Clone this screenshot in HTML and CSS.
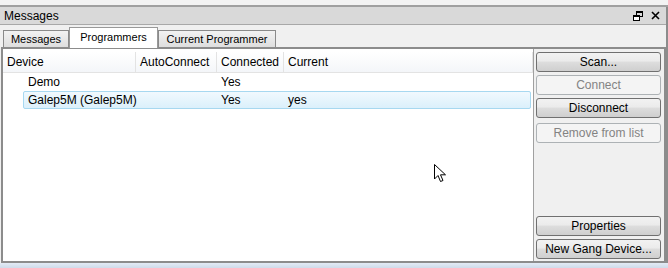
FILE: index.html
```html
<!DOCTYPE html>
<html lang="en">
<head>
    <meta charset="UTF-8">
    <title>Messages</title>
    <link rel="stylesheet" href="styles.css">
</head>
<body>
    <div class="top-strip"></div>

    <div class="dock">
        <div class="dock-title">
            <span>Messages</span>
            <div class="dock-icons">
                <svg width="10" height="10" viewBox="0 0 10 10">
                    <rect x="3.5" y="0.5" width="6" height="5" fill="none" stroke="#000"/>
                    <rect x="3.5" y="0.5" width="6" height="1.5" fill="#000"/>
                    <rect x="0.5" y="4.5" width="6" height="5" fill="#fff" stroke="#000"/>
                    <rect x="0.5" y="4.5" width="6" height="1.5" fill="#000"/>
                </svg>
                <svg width="9" height="9" viewBox="0 0 9 9">
                    <path d="M1 1 L8 8 M8 1 L1 8" stroke="#000" stroke-width="1.6"/>
                </svg>
            </div>
        </div>

        <div class="tabs">
            <div class="tab t-msg">Messages</div>
            <div class="tab t-prog active">Programmers</div>
            <div class="tab t-cur">Current Programmer</div>
        </div>

        <div class="panel">
            <div class="list">
                <div class="list-head">
                    <div class="col c-device">Device</div>
                    <div class="col c-auto">AutoConnect</div>
                    <div class="col c-conn">Connected</div>
                    <div class="col c-cur">Current</div>
                </div>
                <div class="row">
                    <div class="col c-device">Demo</div>
                    <div class="col c-auto"></div>
                    <div class="col c-conn">Yes</div>
                    <div class="col c-cur"></div>
                </div>
                <div class="row selected">
                    <div class="col c-device">Galep5M (Galep5M)</div>
                    <div class="col c-auto"></div>
                    <div class="col c-conn">Yes</div>
                    <div class="col c-cur">yes</div>
                </div>

                <!-- mouse pointer -->
                <svg class="cursor" width="14" height="20" viewBox="0 0 14 20">
                    <path d="M0.5 0.5 L0.5 15 L4 11.5 L6.5 17.5 L9 16.5 L6.5 10.8 L11.5 10.8 Z" fill="#fff" stroke="#000" stroke-width="1"/>
                </svg>
            </div>

            <div class="side">
                <button class="btn">Scan...</button>
                <button class="btn" disabled>Connect</button>
                <button class="btn">Disconnect</button>
                <button class="btn spaced" disabled>Remove from list</button>
                <div class="grow"></div>
                <button class="btn">Properties</button>
                <button class="btn">New Gang Device...</button>
            </div>
        </div>
    </div>

    <div class="bottom-strip"></div>
</body>
</html>
```

FILE: styles.css
```css
body {
    margin: 0;
    width: 668px;
    height: 268px;
    overflow: hidden;
    font-family: "Liberation Sans", Arial, sans-serif;
    font-size: 12px;
    color: #000;
    background: #f0f0f0;
}

.top-strip {
    height: 5px;
    background: #f3f3f3;
    border-bottom: 2px solid #a0a0a0;
}

/* Ventana acoplada */
.dock {
    height: 256px;
    display: flex;
    flex-direction: column;
    border-right: 2px solid #8c8c8c;
}

.dock-title {
    height: 17px;
    display: flex;
    align-items: center;
    justify-content: space-between;
    padding: 0 6px 0 4px;
    background: #d9d9d9;
    border-bottom: 1px solid #a8a8a8;
}

.dock-icons {
    display: flex;
    align-items: center;
    gap: 8px;
}

.tabs {
    display: flex;
    align-items: flex-end;
    height: 22px;
    padding-left: 3px;
}

.tab {
    box-sizing: border-box;
    height: 17px;
    line-height: 17px;
    text-align: center;
    font-size: 11px;
    background: linear-gradient(#f2f2f2, #dedede);
    border: 1px solid #8a8a8a;
    border-bottom: none;
    white-space: nowrap;
}

.t-msg  { width: 66px; }
.t-prog { width: 89px; }
.t-cur  { width: 118px; }

.tab.active {
    height: 21px;
    line-height: 18px;
    background: #fff;
    border-color: #999;
    margin-bottom: -1px;
    position: relative;
    z-index: 1;
}

.panel {
    flex: 1;
    display: flex;
    margin-left: 1px;
    border: 2px solid #8c8c8c;
    background: #f0f0f0;
}

.list {
    position: relative;
    flex: 1;
    background: #fff;
    border-right: 1px solid #a0a0a0;
    padding-top: 3px;
}

.col {
    box-sizing: border-box;
    padding-left: 4px;
    white-space: nowrap;
}

.list-head {
    display: flex;
    height: 20px;
    line-height: 20px;
    border-bottom: 1px solid #e3e3e3;
    background: linear-gradient(#fff, #f4f6f9);
}

.list-head .col {
    border-right: 1px solid #e3e3e3;
}

.list-head .c-device { width: 133px; }
.c-auto { width: 81px; }
.c-conn { width: 67px; }
.c-cur  { flex: 1; }

.row {
    display: flex;
    height: 16px;
    line-height: 16px;
    margin: 0 2px 0 20px;
    border: 1px solid transparent;
}

.row .c-device {
    width: 112px;
}

.row.selected {
    border-color: #a7d8f0;
    border-radius: 2px;
    background: linear-gradient(#f1f9fe, #dbf0fb);
}

.cursor {
    position: absolute;
    left: 431px;
    top: 115px;
}

/* Botones de la derecha */
.side {
    width: 125px;
    display: flex;
    flex-direction: column;
    gap: 3px;
    padding: 3px 3px 2px 2px;
}

.grow {
    flex: 1;
}

.btn {
    height: 20px;
    font: inherit;
    color: #000;
    padding: 0;
    border: 1px solid #707070;
    border-radius: 3px;
    background: linear-gradient(#f2f2f2 0%, #ebebeb 45%, #dddddd 50%, #cfcfcf 100%);
}

.btn:disabled {
    color: #838383;
    border-color: #adb2b5;
    background: #f4f4f4;
}

.btn.spaced {
    margin-top: 2px;
}

.bottom-strip {
    height: 5px;
    background: linear-gradient(#e3ebf5, #cfdbea);
}
```
